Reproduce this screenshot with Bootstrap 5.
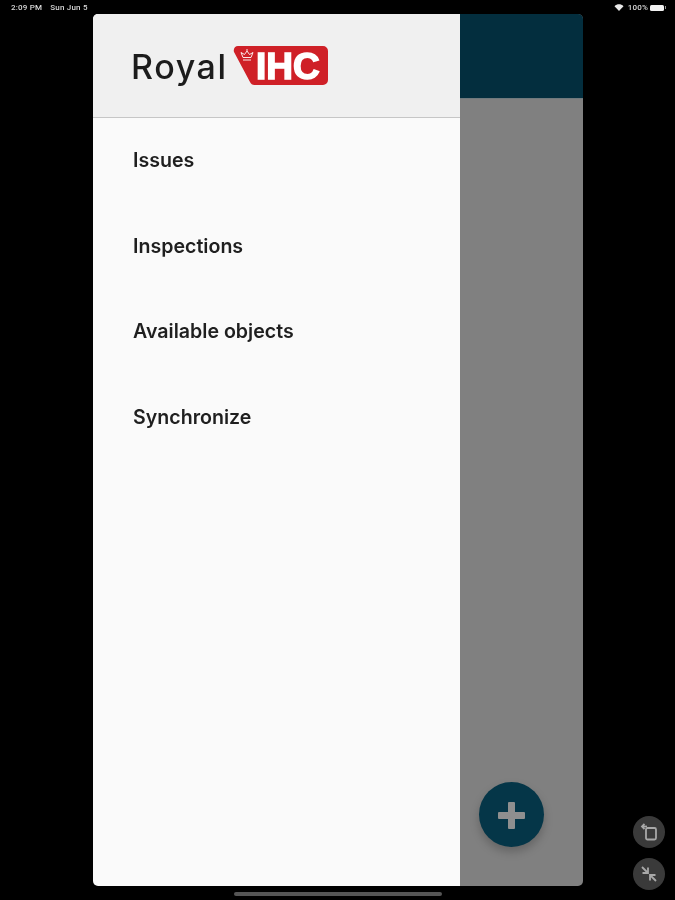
<!DOCTYPE html>
<html lang="en">
<head>
<meta charset="utf-8">
<title>Royal IHC</title>
<link rel="stylesheet" href="https://cdn.jsdelivr.net/npm/bootstrap@5.3.0/dist/css/bootstrap.min.css">
<style>
html,body{height:900px;overflow:hidden;background:#000;}
body{font-family:Inter,"Liberation Sans",sans-serif;position:relative;filter:blur(.45px);}
.status-strip{height:14px;padding:1px 9px 0 11px;color:#d8d8d8;font-size:8px;line-height:13px;font-family:Roboto,sans-serif;font-weight:500;letter-spacing:.2px;}
.status-strip .date-txt{margin-left:8px;}
.batt{width:14px;height:6px;background:#f2f2f2;border-radius:1.5px;margin-left:2px;}
.batt-tip{width:1px;height:3px;background:#999;margin-left:1px;}
.app-window{width:490px;height:872px;margin-left:93px;border-radius:5px;overflow:hidden;position:relative;}
.drawer{width:367px;background:#fafafa;}
.drawer-head{height:104px;background:#f0f0f0;border-bottom:1px solid #c6c6c6;padding-left:38px;padding-top:32px;}
.logo-word{font-family:Inter,sans-serif;font-size:34px;line-height:42px;font-weight:500;color:#1c1c1c;width:102px;letter-spacing:1.6px;}
.logo-mark text{font-family:"Liberation Sans",sans-serif;font-weight:700;font-size:37px;fill:#fff;stroke:#fff;stroke-width:1.5px;}
.menu-list{margin-top:-9px;}
.menu-entry{height:85.6px;padding-left:40px;color:#1f1f1f;font-size:19.6px;font-weight:600;line-height:86px;background:transparent;border:0;}
.side-panel{background:#808080;}
.top-band{height:85px;background:#032e3e;border-bottom:1px solid #6f7a7e;}
.fab-add{position:absolute;right:39px;bottom:39px;width:65px;height:65px;border-radius:50%;background:#053648;box-shadow:0 5px 10px rgba(0,0,0,.22);}
.plus-mark{margin-top:2px;}
.round-ctl{position:absolute;left:633px;width:32px;height:32px;border-radius:50%;background:#3a3a3a;}
.ctl-a{top:816px;}
.ctl-b{top:858px;}
.home-bar{width:208px;height:4px;border-radius:2px;background:#555;margin:6px 0 0 234px;}
</style>
</head>
<body>
<div class="status-strip d-flex align-items-center">
  <span>2:09 PM</span><span class="date-txt">Sun Jun 5</span>
  <span class="ms-auto d-flex align-items-center">
    <svg width="10" height="7" viewBox="0 0 9 7" class="me-1"><path d="M0 2.200C2.500-.4 6.500-.4 9 2.200L4.500 7z" fill="#e8e8e8"/></svg>
    <span>100%</span><span class="batt"></span><span class="batt-tip"></span>
  </span>
</div>
<div class="app-window d-flex">
  <nav class="drawer d-flex flex-column">
    <div class="drawer-head d-flex align-items-start">
      <span class="logo-word">Royal</span>
      <svg class="logo-mark" width="97" height="40" viewBox="0 0 97 40">
        <path d="M5 0H90a5 5 0 0 1 5 5V34a5 5 0 0 1-5 5H22a5 5 0 0 1-5-3L1 6C0 3 2 0 5 0z" fill="#cf2027"/>
        <g fill="none" stroke="#fff" stroke-width=".9">
          <path d="M10 11.500L8 6.500 11.500 8.500 14 5 16.500 8.500 20 6.500 18 11.500z"/>
          <path d="M10 14H18"/><path d="M14 3V5"/>
        </g>
        <text x="23" y="33">IHC</text>
      </svg>
    </div>
    <div class="list-group list-group-flush menu-list rounded-0">
      <a class="list-group-item menu-entry" href="#">Issues</a>
      <a class="list-group-item menu-entry" href="#">Inspections</a>
      <a class="list-group-item menu-entry" href="#">Available objects</a>
      <a class="list-group-item menu-entry" href="#">Synchronize</a>
    </div>
  </nav>
  <div class="side-panel flex-grow-1 d-flex flex-column">
    <div class="top-band"></div>
  </div>
  <button class="fab-add btn p-0 border-0 d-flex align-items-center justify-content-center" aria-label="Add">
    <svg class="plus-mark" width="27" height="27" viewBox="0 0 27 27"><path d="M10 1a1 1 0 0 1 1-1h5a1 1 0 0 1 1 1v9h9a1 1 0 0 1 1 1v5a1 1 0 0 1-1 1h-9v9a1 1 0 0 1-1 1h-5a1 1 0 0 1-1-1v-9H1a1 1 0 0 1-1-1v-5a1 1 0 0 1 1-1h9z" fill="#8f8f8f"/></svg>
  </button>
</div>
<div class="home-bar"></div>
<div class="round-ctl ctl-a d-flex align-items-center justify-content-center">
  <svg width="20" height="20" viewBox="0 0 20 20" fill="none" stroke="#a8a8a8" stroke-width="1.8"><rect x="7" y="6" width="10" height="11.500" rx="1.500"/><path d="M3 4.500H8"/><path d="M5.500 2 3 4.500 5.500 7"/></svg>
</div>
<div class="round-ctl ctl-b d-flex align-items-center justify-content-center">
  <svg width="20" height="20" viewBox="0 0 20 20" fill="none" stroke="#a8a8a8" stroke-width="1.8"><path d="M3 3 8.500 8.500M3.500 9H9V3.500"/><path d="M17 17 11.500 11.500M16.500 11H11V16.500"/></svg>
</div>
</body>
</html>
